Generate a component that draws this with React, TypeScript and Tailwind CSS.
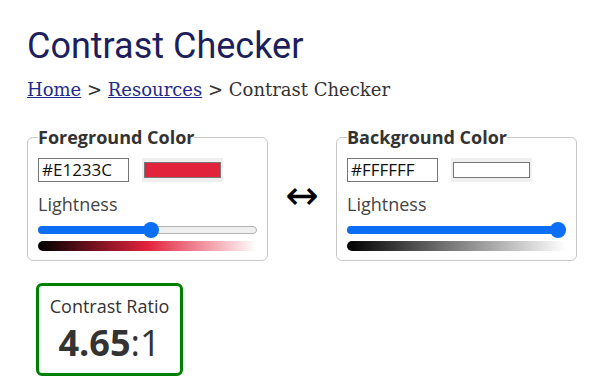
import React from "react";

function Slider({ value }: { value: number }) {
  const trackW = 219;
  const thumb = 16;
  const x = 8 + value * (trackW - thumb);
  return (
    <div className="relative h-[16px] w-full">
      <div className="absolute left-0 right-0 top-[4px] h-[8px] rounded-full border border-[#b2b2b2] bg-[#efefef]" />
      <div
        className="absolute left-0 top-[4px] h-[8px] rounded-full bg-[#0b6ef5]"
        style={{ width: x }}
      />
      <div
        className="absolute top-0 h-[16px] w-[16px] rounded-full bg-[#0b6ef5]"
        style={{ left: x - 8 }}
      />
    </div>
  );
}

function ColorPanel({
  title,
  hex,
  swatch,
  value,
  gradient,
}: {
  title: string;
  hex: string;
  swatch: string;
  value: number;
  gradient: string;
}) {
  return (
    <fieldset className="w-[241px] rounded-[6px] border border-[#c8c8c8] px-[10px] pb-[9px]">
      <legend className="text-[18px] font-bold leading-[25px] text-[#333]">{title}</legend>
      <div className="mt-[8px] flex items-center gap-[13px]">
        <div className="flex h-[24px] w-[91px] items-center border border-[#767676] pl-[3px] text-[17px] text-[#111]">
          {hex}
        </div>
        <div className="h-[24px] w-[81px] bg-[#efefef] px-[2px] py-[4px]">
          <div className="h-full w-full border border-[#777]" style={{ background: swatch }} />
        </div>
      </div>
      <div className="mt-[10px] text-[18px] leading-[24px] text-[#444]">Lightness</div>
      <div className="mt-[6px]">
        <Slider value={value} />
      </div>
      <div className="mt-[3px] h-[10px] w-full rounded-l-full" style={{ background: gradient }} />
    </fieldset>
  );
}

export default function App() {
  return (
    <div
      className="min-h-[387px] bg-white pl-[27px] pt-[25px] text-[#333]"
      style={{ fontFamily: '"Open Sans", sans-serif' }}
    >
      <h1
        className="text-[36px] font-normal leading-[42px] text-[#1c1f5b]"
        style={{ fontFamily: 'Roboto, sans-serif' }}
      >
        Contrast Checker
      </h1>
      <div
        className="mt-[10px] text-[18px] leading-[26px] text-[#333]"
        style={{ fontFamily: '"DejaVu Serif", serif' }}
      >
        <a className="text-[#1f2a8a] underline">Home</a> &gt;{" "}
        <a className="text-[#1f2a8a] underline">Resources</a> &gt; Contrast Checker
      </div>
      <div className="mt-[22px] flex items-center">
        <ColorPanel
          title="Foreground Color"
          hex="#E1233C"
          swatch="#E1233C"
          value={0.515}
          gradient="linear-gradient(to right, #000000, #E1233C, #ffffff)"
        />
        <div
          className="mt-[4px] flex w-[68px] justify-center text-[40px] leading-none text-black"
          style={{ fontFamily: '"DejaVu Sans", sans-serif' }}
        >
          ↔
        </div>
        <ColorPanel
          title="Background Color"
          hex="#FFFFFF"
          swatch="#FFFFFF"
          value={1}
          gradient="linear-gradient(to right, #000000, #ffffff)"
        />
      </div>
      <div className="ml-[9px] mt-[22px] flex w-[147px] flex-col items-center rounded-[6px] border-[3px] border-[#008000] pb-[8px] pt-[8px]">
        <div className="text-[18px] leading-[24px] text-[#333]">Contrast Ratio</div>
        <div className="mt-[3px] text-[36px] leading-[44px] text-[#333]">
          <span className="font-bold">4.65</span>:1
        </div>
      </div>
    </div>
  );
}
